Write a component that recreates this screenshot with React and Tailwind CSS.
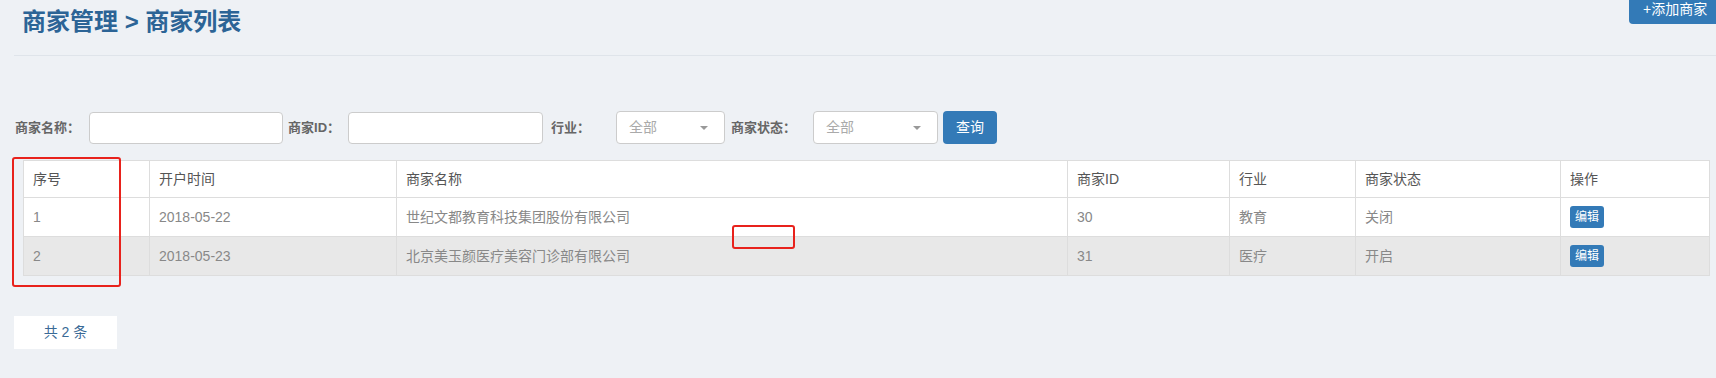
import React from "react";

const rows = [
  { id: "1", time: "2018-05-22", name: "世纪文都教育科技集团股份有限公司", mid: "30", ind: "教育", st: "关闭", bg: "bg-white" },
  { id: "2", time: "2018-05-23", name: "北京美玉颜医疗美容门诊部有限公司", mid: "31", ind: "医疗", st: "开启", bg: "bg-[#e8e8e8]" },
];

function Select({ w }) {
  return (
    <div className={`${w} h-[33px] bg-white border border-[#ccc] rounded-[4px] flex items-center justify-between pl-[12px] pr-[16px]`}>
      <span className="text-[14px] font-normal text-[#aaa]">全部</span>
      <span className="w-0 h-0 border-l-[4px] border-r-[4px] border-t-[4px] border-l-transparent border-r-transparent border-t-[#999]"></span>
    </div>
  );
}

export default function App() {
  return (
    <div className="relative min-h-[378px] bg-[#eef1f5] px-[14px] font-['Liberation_Sans','Noto_Sans_CJK_SC',sans-serif] overflow-hidden">
      <div className="flex justify-between items-start h-[56px] border-b border-[#dfe4ea] mr-[-14px]">
        <h1 className="pl-[8px] pt-[6px] text-[24px] leading-[32px] font-bold text-[#2c6496]">商家管理 &gt; 商家列表</h1>
        <button className="w-[87px] h-[24px] pl-[14px] text-left bg-[#337ab7] text-white text-[14px] leading-[18px] rounded-bl-[4px] self-start flex items-start pt-0">+添加商家</button>
      </div>

      <div className="mt-[55px] flex items-center h-[33px] text-[13px] font-bold text-[#666]">
        <span className="ml-[1px]">商家名称：</span>
        <div className="ml-[9px] w-[194px] h-[32px] bg-white border border-[#ccc] rounded-[4px]"></div>
        <span className="ml-[5px]">商家ID：</span>
        <div className="ml-[8px] w-[195px] h-[32px] bg-white border border-[#ccc] rounded-[4px]"></div>
        <span className="ml-[8px] w-[65px]">行业：</span>
        <Select w="w-[109px]" />
        <span className="ml-[6px] w-[82px]">商家状态：</span>
        <Select w="w-[125px]" />
        <button className="ml-[5px] w-[54px] h-[33px] bg-[#337ab7] text-white text-[14px] font-normal rounded-[4px]">查询</button>
      </div>

      <table className="mt-[16px] ml-[9px] w-[1686px] table-fixed border-collapse bg-white text-[14px]">
        <colgroup>
          <col className="w-[126px]" />
          <col className="w-[247px]" />
          <col className="w-[671px]" />
          <col className="w-[162px]" />
          <col className="w-[126px]" />
          <col className="w-[205px]" />
          <col className="w-[149px]" />
        </colgroup>
        <thead>
          <tr className="h-[37px]">
            {["序号", "开户时间", "商家名称", "商家ID", "行业", "商家状态", "操作"].map((h) => (
              <th key={h} className="border border-[#ddd] px-[9px] text-left font-normal text-[#555]">{h}</th>
            ))}
          </tr>
        </thead>
        <tbody>
          {rows.map((r) => (
            <tr key={r.id} className={`h-[39px] ${r.bg} text-[#888]`}>
              <td className="border border-[#ddd] px-[9px]">{r.id}</td>
              <td className="border border-[#ddd] px-[9px]">{r.time}</td>
              <td className="border border-[#ddd] px-[9px]">{r.name}</td>
              <td className="border border-[#ddd] px-[9px]">{r.mid}</td>
              <td className="border border-[#ddd] px-[9px]">{r.ind}</td>
              <td className="border border-[#ddd] px-[9px]">{r.st}</td>
              <td className="border border-[#ddd] px-[9px]">
                <span className="inline-flex items-center justify-center w-[34px] h-[22px] bg-[#337ab7] text-white text-[12px] rounded-[3px]">编辑</span>
              </td>
            </tr>
          ))}
        </tbody>
      </table>

      <div className="mt-[40px] w-[103px] h-[33px] bg-white flex items-center justify-center text-[14px] text-[#3a6a96]">共 2 条</div>

      <div className="absolute left-[12px] top-[157px] w-[109px] h-[130px] border-2 border-[#e8221c] rounded-[3px]"></div>
      <div className="absolute left-[732px] top-[225px] w-[63px] h-[24px] border-2 border-[#e8221c] rounded-[3px]"></div>
    </div>
  );
}
